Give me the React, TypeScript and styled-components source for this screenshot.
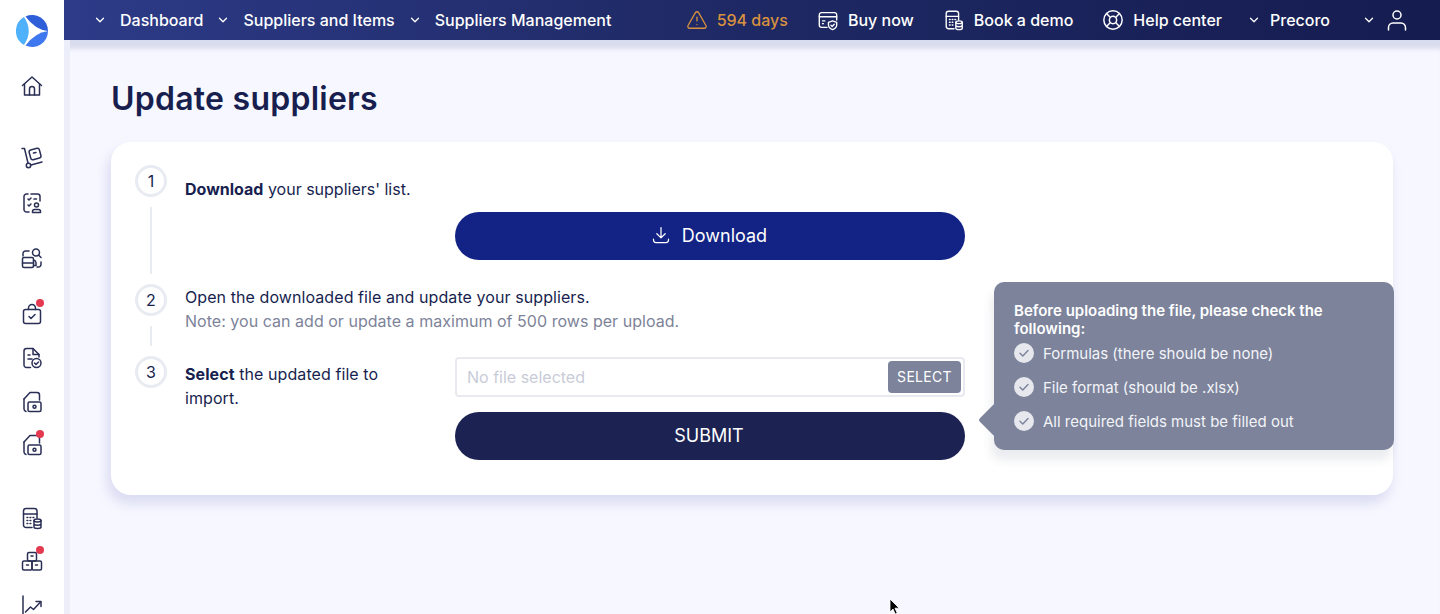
import { ReactNode } from "react"
import styled, { createGlobalStyle } from "styled-components"
import { ChevronDown, LifeBuoy, TriangleAlert } from "lucide-react"

const GlobalStyle = createGlobalStyle`
  html, body {
    margin: 0;
    height: 100%;
    overflow: hidden;
  }

  body {
    font-family: Inter, "Liberation Sans", sans-serif;
    color: #181f4f;
  }

  * {
    box-sizing: border-box;
  }
`

const Shell = styled.div`
  position: relative;
  display: flex;
  width: 1440px;
  height: 614px;
  overflow: hidden;
  background: #fff;
`

const Sidebar = styled.aside`
  display: flex;
  flex-direction: column;
  align-items: center;
  flex: 0 0 64px;
  padding-top: 15px;
  background: #fff;

  & > svg {
    flex: none;
  }
`

const SideItem = styled.div<{ $gap: number }>`
  position: relative;
  display: flex;
  width: 24px;
  height: 24px;
  flex: none;
  margin-top: ${({ $gap }) => $gap}px;
  color: #2a2f55;
`

const Dot = styled.span`
  position: absolute;
  top: -3px;
  right: 0;
  width: 8px;
  height: 8px;
  border-radius: 50%;
  background: #e5394f;
`

const Main = styled.div`
  display: flex;
  flex-direction: column;
  flex: 1;
  min-width: 0;
`

const TopBar = styled.header`
  display: flex;
  align-items: center;
  justify-content: space-between;
  flex: 0 0 40px;
  padding: 0 31px 0 29px;
  color: #fff;
  font-size: 16px;
  font-weight: 500;
  background: linear-gradient(90deg, #2d3b88 0%, #1f2a66 45%, #151c50 100%);
`

const NavGroup = styled.nav`
  display: flex;
  align-items: center;
`

const NavItem = styled.a<{ $gap?: number; $warn?: boolean }>`
  display: flex;
  align-items: center;
  gap: 9px;
  margin-left: ${({ $gap }) => $gap ?? 0}px;
  white-space: nowrap;
  color: ${({ $warn }) => ($warn ? "#d9913f" : "#fff")};
`

const NavChevron = styled(ChevronDown)<{ $inset?: number }>`
  width: 14px;
  height: 14px;
  margin-right: ${({ $inset }) => $inset ?? 0}px;
  stroke-width: 2.2;
`

const Workspace = styled.main`
  flex: 1;
  padding: 0 47px;
  background: #f7f8ff;
  box-shadow: inset 6px 0 0 #eceefa, inset 0 12px 5px -3px #d9dcee;
`

const Title = styled.h1`
  margin: 39px 0 23px;
  font-size: 32px;
  line-height: 40px;
  font-weight: 600;
  letter-spacing: 0.25px;
  color: #181f4f;
`

const Card = styled.section`
  position: relative;
  display: flex;
  flex-direction: column;
  padding: 23px 24px 34px;
  background: #fff;
  border-radius: 20px;
  box-shadow: -3px 8px 14px rgba(70, 80, 170, 0.18);
`

const Step = styled.div<{ $height: number }>`
  display: flex;
  gap: 18px;
  height: ${({ $height }) => $height}px;
`

const Marker = styled.div`
  display: flex;
  flex-direction: column;
  align-items: center;
  flex: 0 0 32px;
`

const Circle = styled.div`
  display: flex;
  align-items: center;
  justify-content: center;
  flex: none;
  width: 32px;
  height: 32px;
  border: 3px solid #e9ebf2;
  border-radius: 50%;
  font-size: 16px;
  color: #181f4f;
`

const Connector = styled.div`
  flex: 1;
  width: 2px;
  margin: 10px 0;
  background: #e9ebf2;
`

const StepBody = styled.div<{ $top: number }>`
  flex: 1;
  padding-top: ${({ $top }) => $top}px;
  font-size: 16px;
  line-height: 24px;
  color: #181f4f;
`

const StepLine = styled.div`
  letter-spacing: 0.08px;
`

const Note = styled.div`
  letter-spacing: 0.03px;
  color: #7d8399;
`

const PillButton = styled.button<{ $tone: string }>`
  display: flex;
  align-items: center;
  justify-content: center;
  gap: 11px;
  width: 510px;
  height: 48px;
  padding: 0 2px 2px 0;
  border: 0;
  border-radius: 24px;
  font-family: inherit;
  font-size: 18px;
  color: #fff;
  background: ${({ $tone }) => $tone};
`

const DownloadRow = styled.div`
  margin: 11px 0 0 270px;
`

const SelectRow = styled.div`
  display: flex;
  align-items: flex-start;
`

const SelectText = styled.div`
  flex: 0 0 270px;
  padding: 4px 40px 0 0;
  letter-spacing: 0.08px;
`

const FormColumn = styled.div`
  display: flex;
  flex-direction: column;
  gap: 15px;
  width: 510px;
  margin-top: -1px;
`

const FileField = styled.div`
  display: flex;
  align-items: center;
  justify-content: space-between;
  height: 40px;
  padding: 0 2px 0 10px;
  border: 2px solid #e8eaf0;
  border-radius: 4px;
  font-size: 16px;
  line-height: 22px;
  color: #c9ccd8;
`

const SelectButton = styled.button`
  width: 73px;
  height: 32px;
  padding: 0 0 1px;
  border: 0;
  border-radius: 4px;
  font-family: inherit;
  font-size: 14px;
  letter-spacing: 0.3px;
  color: #fff;
  background: #7c839b;
`

const Tooltip = styled.aside`
  position: absolute;
  top: 140px;
  left: 883px;
  display: flex;
  flex-direction: column;
  gap: 14px;
  width: 400px;
  padding: 20px 20px 19px;
  border-radius: 10px;
  color: #fff;
  font-size: 15px;
  background: #7c839b;
  box-shadow: -3px 10px 10px rgba(60, 65, 100, 0.1);

  &::before {
    content: "";
    position: absolute;
    top: 126px;
    left: -11px;
    width: 24px;
    height: 24px;
    border-radius: 3px;
    background: #7c839b;
    transform: rotate(45deg);
  }
`

const TooltipTitle = styled.div`
  position: relative;
  margin-bottom: -9px;
  padding-right: 40px;
  font-weight: 600;
  line-height: 18px;
`

const TipRow = styled.div`
  position: relative;
  display: flex;
  align-items: center;
  gap: 9px;
  height: 20px;
  color: #f3f4f8;
`

const Cursor = styled.svg`
  position: absolute;
  left: 889px;
  top: 598px;
  width: 12px;
  height: 17px;
`

const Icon = ({ children, size = 24 }: { children: ReactNode; size?: number }) => (
  <svg
    width={size}
    height={size}
    viewBox="0 0 24 24"
    fill="none"
    stroke="currentColor"
    strokeWidth="1.5"
    strokeLinecap="round"
    strokeLinejoin="round"
  >
    {children}
  </svg>
)

const Logo = () => (
  <svg width="32" height="32" viewBox="0 0 32 32">
    <path d="M8 2.100A16 16 0 0 0 8 29.900Q17.500 16 8 2.100Z" fill="#4fb0fb" />
    <path d="M9.500 1.400A16 16 0 0 1 32 16Q19 14.500 9.500 1.400Z" fill="#2f5fd8" />
    <path d="M9.500 30.600A16 16 0 0 0 32 16Q19 17.500 9.500 30.600Z" fill="#3f78ee" />
  </svg>
)

const HomeIcon = () => (
  <Icon>
    <path d="M2.500 11.500L12 3l9.500 8.500" />
    <path d="M4.500 10v11h15V10" />
    <path d="M9.500 21v-6a2.500 2.500 0 0 1 5 0v6" />
  </Icon>
)

const TrolleyIcon = () => (
  <Icon>
    <path d="M2 2.500h2.500l3.500 14.500" />
    <circle cx="8.500" cy="19.500" r="2.200" />
    <path d="M11 19l11-3" />
    <rect x="9.800" y="3" width="10.500" height="10" rx="2" transform="rotate(-15 15 8)" />
    <path d="M13.500 7l2.500-.6" />
  </Icon>
)

const ChecklistPersonIcon = () => (
  <Icon>
    <path d="M8 3H6.500A2.500 2.500 0 0 0 4 5.500v13A2.500 2.500 0 0 0 6.500 21H9" />
    <path d="M11 3h6.500A2.500 2.500 0 0 1 20 5.500V10" />
    <path d="M8 8l1 1 2-2M14 8h2.500M8 14l1 1 2-2" />
    <circle cx="16.500" cy="14" r="2" />
    <path d="M12.500 21.500v-1a2 2 0 0 1 2-2h4a2 2 0 0 1 2 2v1z" />
  </Icon>
)

const TruckSearchIcon = () => (
  <Icon>
    <path d="M3 10V7.500A2.500 2.500 0 0 1 5.500 5H9" />
    <path d="M21 16v2.500a2.500 2.500 0 0 1-2.500 2.500H17" />
    <circle cx="16" cy="6.500" r="3.500" />
    <path d="M18.500 9l2.500 2.500" />
    <rect x="2.500" y="11.500" width="11" height="10" rx="1.500" />
    <path d="M13.500 14.500h1.500l1 2v3h-2.500M2.500 17h11" />
  </Icon>
)

const BagCheckIcon = () => (
  <Icon>
    <rect x="3.500" y="7.500" width="17" height="14" rx="2" />
    <path d="M8.500 7.500V6a3.500 3.500 0 0 1 7 0v1.500" />
    <path d="M9 14.500l2 2 4-4" />
  </Icon>
)

const DocCheckIcon = () => (
  <Icon>
    <path d="M10.500 21.500H6.500A2.500 2.500 0 0 1 4 19V5a2.500 2.500 0 0 1 2.500-2.500H13l6 6V11" />
    <path d="M13 2.500V8.500h6M8 9h2M8 13h4" />
    <circle cx="16.500" cy="17" r="4.500" />
    <path d="M14.500 17l1.500 1.500 2.500-2.500" />
  </Icon>
)

const DocCashIcon = () => (
  <Icon>
    <path d="M4 9v10a2.500 2.500 0 0 0 2 2.400" />
    <path d="M4 9l6-6.500h7A2.500 2.500 0 0 1 19.500 5v5" />
    <rect x="8" y="12" width="13" height="9.500" rx="1.500" />
    <circle cx="14.500" cy="16.700" r="1.500" />
  </Icon>
)

const CalcDbIcon = ({ size = 24 }: { size?: number }) => (
  <Icon size={size}>
    <path d="M12 21.500H6A2.500 2.500 0 0 1 3.500 19V5A2.500 2.500 0 0 1 6 2.500h8.500A2.500 2.500 0 0 1 17 5v7" />
    <path d="M3.500 8h13.500" />
    <path d="M7 11.500h.8M10 11.500h.8M13 11.500h.8M7 14.500h.8M10 14.500h.8M7 17.500h.8M10 17.500h.8" />
    <ellipse cx="17.500" cy="14.500" rx="3.500" ry="1.500" />
    <path d="M14 14.500v6.500c0 .8 1.500 1.500 3.500 1.500s3.500-.7 3.500-1.500v-6.500M14 17.800c0 .8 1.500 1.500 3.500 1.500s3.500-.7 3.500-1.500" />
  </Icon>
)

const BoxesIcon = () => (
  <Icon>
    <rect x="7.500" y="3.500" width="9" height="8.500" rx="1.500" />
    <rect x="2.500" y="12" width="9.500" height="9" rx="1.500" />
    <rect x="12" y="12" width="9.500" height="9" rx="1.500" />
    <path d="M11 7h2M6.500 16h2M15.500 16h2" />
  </Icon>
)

const ChartIcon = () => (
  <Icon>
    <path d="M3 2v21" />
    <path d="M5.500 18l5-5 3 2.500 7-7.500" />
    <path d="M16 7.500h5v5" />
  </Icon>
)

const CardShieldIcon = () => (
  <Icon size={22}>
    <path d="M11 20H5a2.500 2.500 0 0 1-2.500-2.500v-11A2.500 2.500 0 0 1 5 4h14a2.500 2.500 0 0 1 2.500 2.500V12" />
    <path d="M2.500 8.500h19M6 13h2.500M6 16h1" />
    <path d="M17 13l4.500 1.500v3c0 2.500-2 4-4.500 5-2.500-1-4.500-2.500-4.500-5v-3z" />
    <path d="M15.200 17.800l1.300 1.200 2.300-2.300" />
  </Icon>
)

const UserIcon = () => (
  <Icon>
    <circle cx="12" cy="7" r="4" />
    <path d="M3.500 22v-2.500A4.500 4.500 0 0 1 8 15h8a4.500 4.500 0 0 1 4.500 4.500V22" />
  </Icon>
)

const DownloadIcon = () => (
  <Icon size={20}>
    <path d="M12 3v12M7 10.500l5 5 5-5" />
    <path d="M3 17v1a3 3 0 0 0 3 3h12a3 3 0 0 0 3-3v-1" />
  </Icon>
)

const CheckBadge = () => (
  <svg width="20" height="20" viewBox="0 0 20 20" fill="none">
    <circle cx="10" cy="10" r="10" fill="#e6e8ee" />
    <path d="M6 10.200l2.800 2.800 5.200-5.500" stroke="#7c839b" strokeWidth="1.400" strokeLinecap="round" strokeLinejoin="round" />
  </svg>
)

const sideItems = [
  { key: "home", gap: 27, icon: <HomeIcon /> },
  { key: "trolley", gap: 48, icon: <TrolleyIcon /> },
  { key: "requests", gap: 21, icon: <ChecklistPersonIcon /> },
  { key: "suppliers", gap: 31, icon: <TruckSearchIcon /> },
  { key: "approvals", gap: 32, icon: <BagCheckIcon />, dot: true },
  { key: "orders", gap: 20, icon: <DocCheckIcon /> },
  { key: "invoices", gap: 20, icon: <DocCashIcon /> },
  { key: "payments", gap: 19, icon: <DocCashIcon />, dot: true },
  { key: "budgets", gap: 49, icon: <CalcDbIcon /> },
  { key: "inventory", gap: 19, icon: <BoxesIcon />, dot: true },
  { key: "reports", gap: 21, icon: <ChartIcon /> },
]

const tips = [
  "Formulas (there should be none)",
  "File format (should be .xlsx)",
  "All required fields must be filled out",
]

export default function App() {
  return (
    <Shell>
      <GlobalStyle />
      <Sidebar>
        <Logo />
        {sideItems.map((item) => (
          <SideItem key={item.key} $gap={item.gap}>
            {item.icon}
            {item.dot && <Dot />}
          </SideItem>
        ))}
      </Sidebar>
      <Main>
        <TopBar>
          <NavGroup>
            <NavItem><NavChevron $inset={4} />Dashboard</NavItem>
            <NavItem $gap={13}><NavChevron $inset={4} />Suppliers and Items</NavItem>
            <NavItem $gap={13}><NavChevron $inset={4} />Suppliers Management</NavItem>
          </NavGroup>
          <NavGroup>
            <NavItem $warn><TriangleAlert size={22} strokeWidth={1.4} />594 days</NavItem>
            <NavItem $gap={29}><CardShieldIcon />Buy now</NavItem>
            <NavItem $gap={29}><CalcDbIcon size={22} />Book a demo</NavItem>
            <NavItem $gap={29}><LifeBuoy size={22} strokeWidth={1.6} />Help center</NavItem>
            <NavItem $gap={25}><NavChevron />Precoro</NavItem>
            <NavItem $gap={32}><NavChevron /><UserIcon /></NavItem>
          </NavGroup>
        </TopBar>
        <Workspace>
          <Title>Update suppliers</Title>
          <Card>
            <Step $height={119}>
              <Marker>
                <Circle>1</Circle>
                <Connector />
              </Marker>
              <StepBody $top={12}>
                <div><b>Download</b> your suppliers' list.</div>
                <DownloadRow>
                  <PillButton $tone="#122385"><DownloadIcon />Download</PillButton>
                </DownloadRow>
              </StepBody>
            </Step>
            <Step $height={72}>
              <Marker>
                <Circle>2</Circle>
                <Connector />
              </Marker>
              <StepBody $top={1}>
                <StepLine>Open the downloaded file and update your suppliers.</StepLine>
                <Note>Note: you can add or update a maximum of 500 rows per upload.</Note>
              </StepBody>
            </Step>
            <Step $height={105}>
              <Marker>
                <Circle>3</Circle>
              </Marker>
              <StepBody $top={2}>
                <SelectRow>
                  <SelectText><b>Select</b> the updated file to import.</SelectText>
                  <FormColumn>
                    <FileField>
                      No file selected
                      <SelectButton>SELECT</SelectButton>
                    </FileField>
                    <PillButton $tone="#1c2252">SUBMIT</PillButton>
                  </FormColumn>
                </SelectRow>
              </StepBody>
            </Step>
            <Tooltip>
              <TooltipTitle>Before uploading the file, please check the following:</TooltipTitle>
              {tips.map((tip) => (
                <TipRow key={tip}><CheckBadge />{tip}</TipRow>
              ))}
            </Tooltip>
          </Card>
        </Workspace>
      </Main>
      <Cursor viewBox="0 0 12 17">
        <path d="M1 1v13l3-3 2.200 5 2-1-2.200-4.800h4.200z" fill="#000" stroke="#fff" strokeWidth="0.8" />
      </Cursor>
    </Shell>
  )
}
